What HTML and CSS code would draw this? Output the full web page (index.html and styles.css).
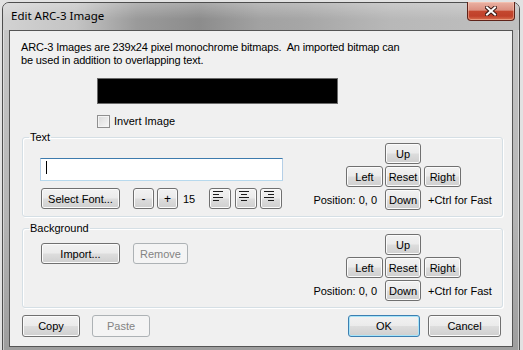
FILE: index.html
```html
<!DOCTYPE html>
<html lang="en">
<head>
    <meta charset="UTF-8">
    <title>Edit ARC-3 Image</title>
    <link rel="stylesheet" href="styles.css">
</head>
<body>
    <div class="window">
        <div class="titlebar">
            <span class="title">Edit ARC-3 Image</span>
            <div class="close">
                <svg width="12" height="10" viewBox="0 0 12 10">
                    <path d="M2 1.5 L10 8.5 M10 1.5 L2 8.5" stroke="#3b1a14" stroke-width="4" stroke-linecap="square"/>
                    <path d="M2 1.5 L10 8.5 M10 1.5 L2 8.5" stroke="#ffffff" stroke-width="2" stroke-linecap="square"/>
                </svg>
            </div>
        </div>

        <div class="client">
            <p class="intro">
                ARC-3 Images are 239x24 pixel monochrome bitmaps.&nbsp; An imported bitmap can<br>
                be used in addition to overlapping text.
            </p>

            <div class="bitmap"></div>

            <div class="check-row">
                <span class="checkbox"></span>
                <span>Invert Image</span>
            </div>

            <fieldset class="group">
                <legend>Text</legend>
                <div class="group-body">
                    <div class="text-left">
                        <div class="edit"><span class="caret"></span></div>
                        <div class="tool-row">
                            <button class="btn font-btn">Select Font...</button>
                            <button class="btn small-btn minus">-</button>
                            <button class="btn small-btn plus">+</button>
                            <span class="size">15</span>
                            <button class="btn align-btn">
                                <svg width="10" height="10" viewBox="0 0 10 10">
                                    <path d="M0 0.5h10M0 3.5h6M0 6.5h10M0 9.5h6" stroke="#1b1b1b" stroke-width="1"/>
                                </svg>
                            </button>
                            <button class="btn align-btn second">
                                <svg width="10" height="10" viewBox="0 0 10 10">
                                    <path d="M0 0.5h10M2 3.5h6M0 6.5h10M2 9.5h6" stroke="#1b1b1b" stroke-width="1"/>
                                </svg>
                            </button>
                            <button class="btn align-btn third">
                                <svg width="10" height="10" viewBox="0 0 10 10">
                                    <path d="M0 0.5h10M4 3.5h6M0 6.5h10M4 9.5h6" stroke="#1b1b1b" stroke-width="1"/>
                                </svg>
                            </button>
                        </div>
                    </div>
                    <div class="nudge">
                        <button class="btn nb up">Up</button>
                        <button class="btn nb left">Left</button>
                        <button class="btn nb reset">Reset</button>
                        <button class="btn nb right">Right</button>
                        <span class="pos">Position: 0, 0</span>
                        <button class="btn nb down">Down</button>
                        <span class="hint">+Ctrl for Fast</span>
                    </div>
                </div>
            </fieldset>

            <fieldset class="group bg-group">
                <legend>Background</legend>
                <div class="group-body">
                    <div class="bg-left">
                        <button class="btn import-btn">Import...</button>
                        <button class="btn remove-btn" disabled>Remove</button>
                    </div>
                    <div class="nudge">
                        <button class="btn nb up">Up</button>
                        <button class="btn nb left">Left</button>
                        <button class="btn nb reset">Reset</button>
                        <button class="btn nb right">Right</button>
                        <span class="pos">Position: 0, 0</span>
                        <button class="btn nb down">Down</button>
                        <span class="hint">+Ctrl for Fast</span>
                    </div>
                </div>
            </fieldset>

            <div class="footer">
                <button class="btn copy-btn">Copy</button>
                <button class="btn paste-btn" disabled>Paste</button>
                <button class="btn ok-btn">OK</button>
                <button class="btn cancel-btn">Cancel</button>
            </div>
        </div>
    </div>
</body>
</html>
```

FILE: styles.css
```css
body {
    margin: 0;
    padding: 0;
    overflow: hidden;
    background: #e2e2e2;
    font-family: "Liberation Sans", Arial, sans-serif;
    font-size: 11px;
    color: #000;
}

.window {
    margin: 2px 0 0 2px;
    width: 518px;
    height: 360px;
    box-sizing: border-box;
    border: 1px solid #4e4e4e;
    border-radius: 7px 7px 0 0;
    background: linear-gradient(180deg, #c9c9c9 0%, #b4b4b4 60%, #9c9c9c 100%);
    box-shadow: inset 0 0 0 1px rgba(255, 255, 255, 0.45);
}

/* title bar: blurred glass */
.titlebar {
    height: 27px;
    display: flex;
    align-items: flex-start;
    border-radius: 6px 6px 0 0;
    background:
        linear-gradient(180deg, rgba(255, 255, 255, 0.25) 0%, rgba(255, 255, 255, 0) 60%),
        linear-gradient(90deg, #d2d2d2 0%, #c4c4c4 14%, #9a9a9a 26%, #8c8c8c 38%, #a2a2a2 50%, #a6a6a6 58%, #b8b8b8 75%, #bfbfbf 100%);
}

.title {
    font-family: "Noto Sans", "Open Sans", sans-serif;
    font-size: 11.5px;
    line-height: 16px;
    padding: 5px 0 0 8px;
    color: #000;
}

.close {
    margin: -1px 4px 0 auto;
    width: 48px;
    height: 19px;
    box-sizing: border-box;
    border: 1px solid #5e2219;
    border-top: none;
    border-radius: 0 0 4px 4px;
    background: linear-gradient(180deg, #eab2a4 0%, #dc9080 45%, #c4472f 52%, #c0402a 78%, #d9704f 100%);
    box-shadow: inset 0 0 0 1px rgba(255, 210, 190, 0.45);
    display: flex;
    align-items: center;
    justify-content: center;
}

.client {
    margin: 0 6px;
    height: 315px;
    border: 1px solid #555;
    background: #f0f0f0;
}

.intro {
    margin: 0;
    padding: 10px 0 0 11px;
    line-height: 13px;
    letter-spacing: -0.15px;
    white-space: nowrap;
}

.bitmap {
    margin: 11px 0 0 87px;
    width: 241px;
    height: 26px;
    box-sizing: border-box;
    border: 1px solid #6a6a6a;
    background: #000;
}

.check-row {
    margin: 11px 0 0 87px;
    height: 13px;
    line-height: 13px;
    display: flex;
    align-items: center;
    gap: 4px;
}

.checkbox {
    width: 13px;
    height: 13px;
    box-sizing: border-box;
    border: 1px solid #8f8f8f;
    background: linear-gradient(135deg, #d9d9d9 0%, #f7f7f7 100%);
    box-shadow: inset 0 0 0 1px #f4f4f4;
}

/* group boxes */
.group {
    margin: 3px 9px 0 12px;
    padding: 0 0 6px 0;
    border: 1px solid #d5dfe5;
    border-radius: 3px;
    box-shadow: inset 1px 1px 0 #fff, 1px 1px 0 #fff;
}

.group legend {
    margin-left: 6px;
    padding: 0 1px;
    line-height: 13px;
}

.bg-group {
    margin-top: 5px;
}

.group-body {
    display: flex;
    align-items: flex-end;
}

.text-left {
    margin: 0 0 1px 17px;
    width: 243px;
    display: flex;
    flex-direction: column;
    gap: 7px;
}

.edit {
    height: 23px;
    box-sizing: border-box;
    border: 1px solid;
    border-color: #3d7bad #b5cfe7 #b7d9ed #b5cfe7;
    background: #fff;
    padding-left: 5px;
}

.caret {
    display: block;
    width: 1px;
    height: 13px;
    margin-top: 2px;
    background: #000;
}

.tool-row {
    margin-left: 1px;
    display: flex;
    align-items: center;
}

.size {
    width: 31px;
    box-sizing: border-box;
    padding-left: 5px;
}

/* buttons */
.btn {
    box-sizing: border-box;
    height: 21px;
    padding: 0;
    border: 1px solid #707070;
    border-radius: 3px;
    background: linear-gradient(180deg, #f2f2f2 0%, #ebebeb 48%, #dddddd 52%, #cfcfcf 100%);
    box-shadow: inset 0 0 0 1px #fbfbfb;
    font-family: "Liberation Sans", Arial, sans-serif;
    font-size: 11px;
    color: #000;
    display: flex;
    align-items: center;
    justify-content: center;
}

.btn:disabled {
    border-color: #adb2b5;
    background: #f4f4f4;
    box-shadow: none;
    color: #838383;
}

.font-btn {
    width: 79px;
    margin-right: 13px;
}

.small-btn {
    width: 21px;
    font-size: 12px;
}

.plus {
    margin-left: 3px;
}

.align-btn {
    width: 22px;
    align-items: flex-start;
    justify-content: flex-start;
    padding: 2px 0 0 3px;
}

.align-btn.second {
    margin-left: 4px;
}

.align-btn.third {
    margin-left: 3px;
}

.nudge {
    margin: -1px 0 0 27px;
    display: grid;
    grid-template-columns: 73px 36px auto;
    grid-template-rows: 21px 21px 21px;
    gap: 2px;
    align-items: center;
}

.nb {
    width: 37px;
}

.up {
    grid-column: 2;
    grid-row: 1;
    width: 36px;
}

.left {
    grid-column: 1;
    grid-row: 2;
    justify-self: end;
}

.reset {
    grid-column: 2;
    grid-row: 2;
    width: 36px;
}

.right {
    grid-column: 3;
    grid-row: 2;
    justify-self: start;
    margin-left: 1px;
}

.pos {
    grid-column: 1;
    grid-row: 3;
    justify-self: end;
    padding-right: 6px;
    white-space: nowrap;
}

.down {
    grid-column: 2;
    grid-row: 3;
    width: 36px;
}

.hint {
    grid-column: 3;
    grid-row: 3;
    padding-left: 5px;
    white-space: nowrap;
}

.bg-left {
    align-self: flex-start;
    margin: 8px 0 0 18px;
    width: 242px;
    display: flex;
    gap: 13px;
}

.import-btn {
    width: 79px;
}

.remove-btn {
    width: 55px;
}

.footer {
    margin-top: 7px;
    padding: 0 11px 0 12px;
    display: flex;
}

.footer .btn {
    height: 22px;
}

.copy-btn {
    width: 58px;
}

.paste-btn {
    width: 58px;
    margin-left: 12px;
}

.ok-btn {
    width: 72px;
    margin-left: auto;
    border-color: #3c7fb1;
    box-shadow: inset 0 0 0 1px #a7e4f9;
}

.cancel-btn {
    width: 73px;
    margin-left: 8px;
}
```
